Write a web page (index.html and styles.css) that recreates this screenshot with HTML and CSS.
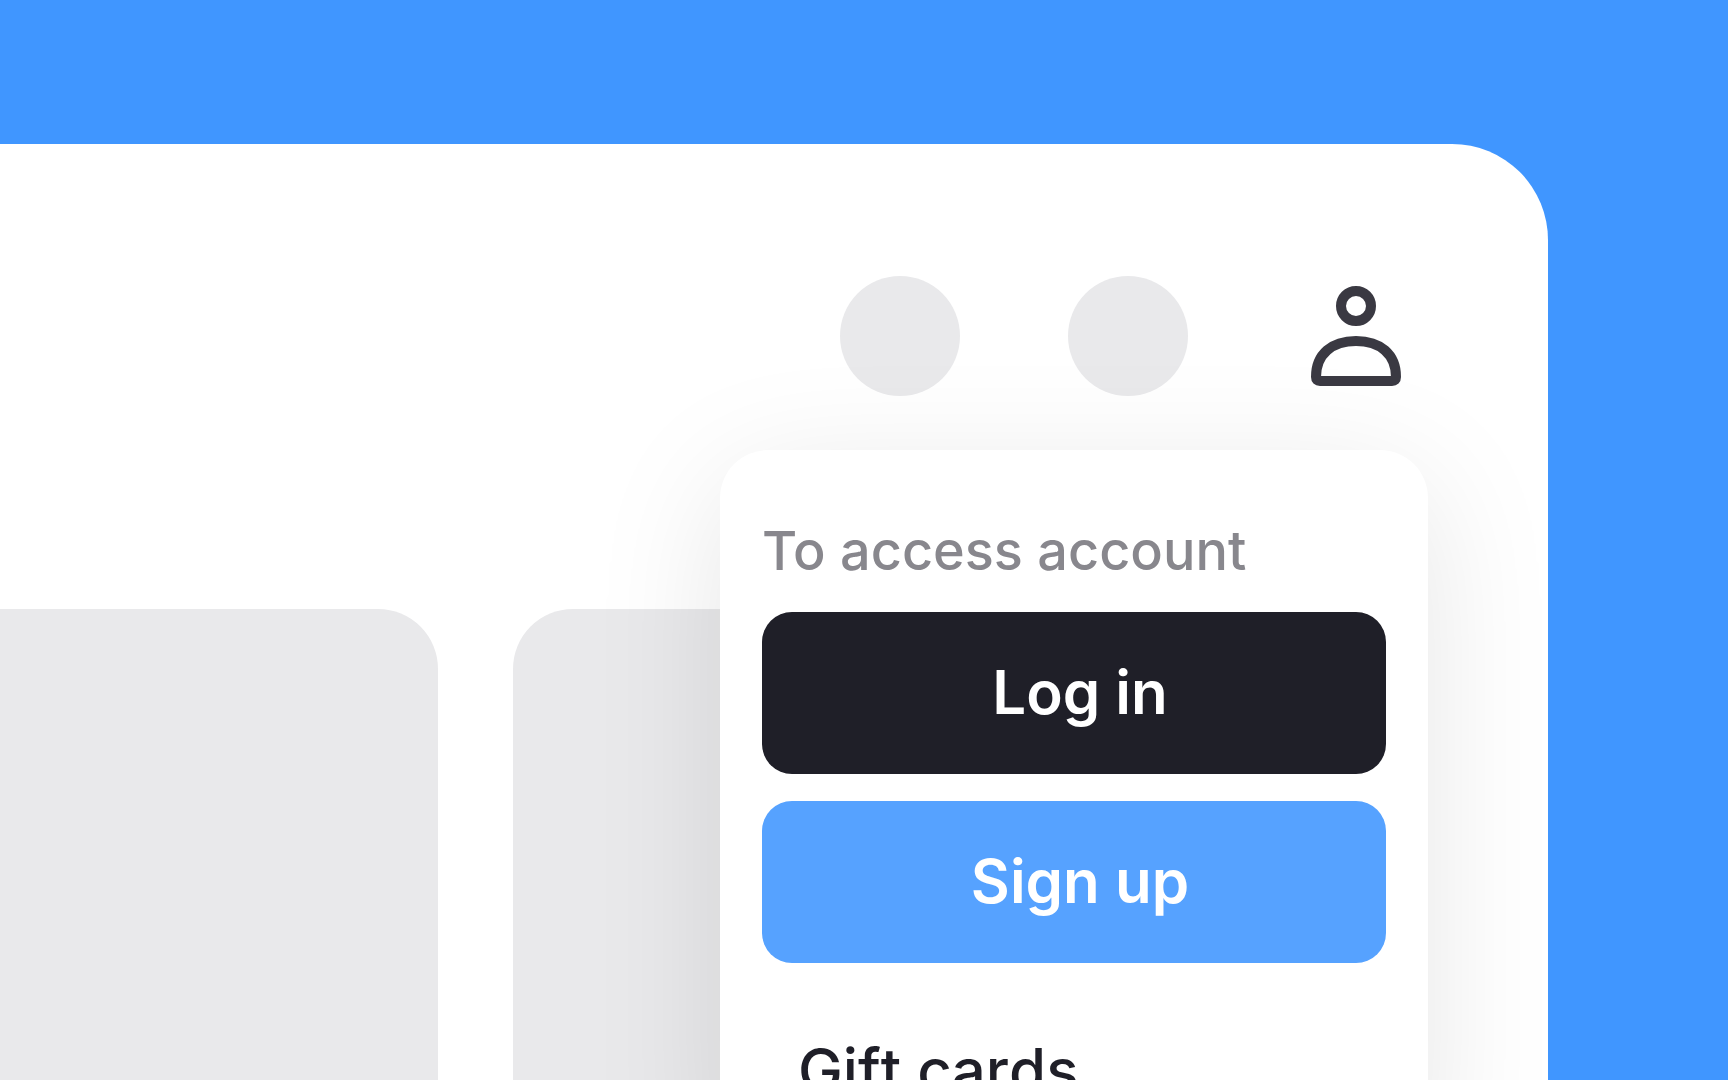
FILE: index.html
```html
<!DOCTYPE html>
<html lang="en">
<head>
  <meta charset="utf-8">
  <meta name="viewport" content="width=device-width, initial-scale=1">
  <title>Account menu</title>
  <link rel="stylesheet" href="styles.css">
</head>
<body>
  <main class="panel">
    <header class="toolbar">
      <span class="dot"></span>
      <span class="dot"></span>
      <div class="account">
        <button class="account-toggle" type="button" aria-label="Account" aria-expanded="true">
          <svg class="account-icon" viewBox="0 0 120 120" fill="none" stroke="currentColor" stroke-width="10" aria-hidden="true">
            <circle cx="60" cy="30" r="15"/>
            <path d="M60 65C36 65 20 78 20 101Q20 105 24 105H96Q100 105 100 101C100 78 84 65 60 65Z"/>
          </svg>
        </button>
        <nav class="menu" aria-label="Account">
          <p class="menu-title">To access account</p>
          <div class="menu-buttons">
            <button class="button button-dark" type="button">Log in</button>
            <button class="button button-blue" type="button">Sign up</button>
          </div>
          <a class="menu-link" href="#">Gift cards</a>
        </nav>
      </div>
    </header>
    <section class="cards">
      <div class="card card-first"></div>
      <div class="card"></div>
    </section>
  </main>
</body>
</html>
```
FILE: styles.css
```css
* {
  box-sizing: border-box;
}

body {
  display: flex;
  height: 100vh;
  margin: 0;
  padding: 144px 180px 0 0;
  overflow: hidden;
  background: #4096ff;
  color: #1f1f28;
  font-family: Inter, "Liberation Sans", sans-serif;
}

.panel {
  display: flex;
  flex: 1;
  flex-direction: column;
  gap: 213px;
  padding-top: 132px;
  border-radius: 0 96px 0 0;
  background: #fff;
}

.toolbar {
  display: flex;
  justify-content: flex-end;
  gap: 108px;
  padding-right: 132px;
}

.dot {
  width: 120px;
  height: 120px;
  border-radius: 50%;
  background: #e9e9eb;
}

.account {
  position: relative;
}

.account-toggle {
  display: block;
  padding: 0;
  border: 0;
  background: none;
  color: #3a3942;
}

.account-icon {
  position: relative;
  z-index: 2;
  display: block;
  width: 120px;
  height: 120px;
}

.menu {
  position: absolute;
  top: 174px;
  right: -12px;
  z-index: 1;
  width: 708px;
  padding: 66px 42px;
  border-radius: 48px;
  background: #fff;
  box-shadow: 0 30px 132px rgba(0, 0, 0, 0.1);
}

.menu-title {
  margin: 0 0 26px;
  color: #88878d;
  font-size: 54px;
  font-weight: 500;
  line-height: 70px;
}

.menu-buttons {
  display: grid;
  gap: 27px;
}

.button {
  height: 162px;
  padding: 0 0 2px 12px;
  border: 0;
  border-radius: 30px;
  color: #fff;
  font-family: inherit;
  font-size: 60px;
  font-weight: 600;
  line-height: 70px;
}

.button-dark {
  background: #1f1f28;
}

.button-blue {
  background: #56a2ff;
}

.menu-link {
  display: block;
  padding: 72px 36px 0;
  color: inherit;
  font-size: 60px;
  font-weight: 500;
  font-kerning: none;
  line-height: 70px;
  text-decoration: none;
}

.cards {
  display: grid;
  flex: 1;
  grid-template-columns: 11fr 23fr;
  gap: 75px;
  padding-right: 120px;
}

.card {
  border-radius: 60px 60px 0 0;
  background: #e9e9eb;
}

.card-first {
  border-top-left-radius: 0;
}
```
